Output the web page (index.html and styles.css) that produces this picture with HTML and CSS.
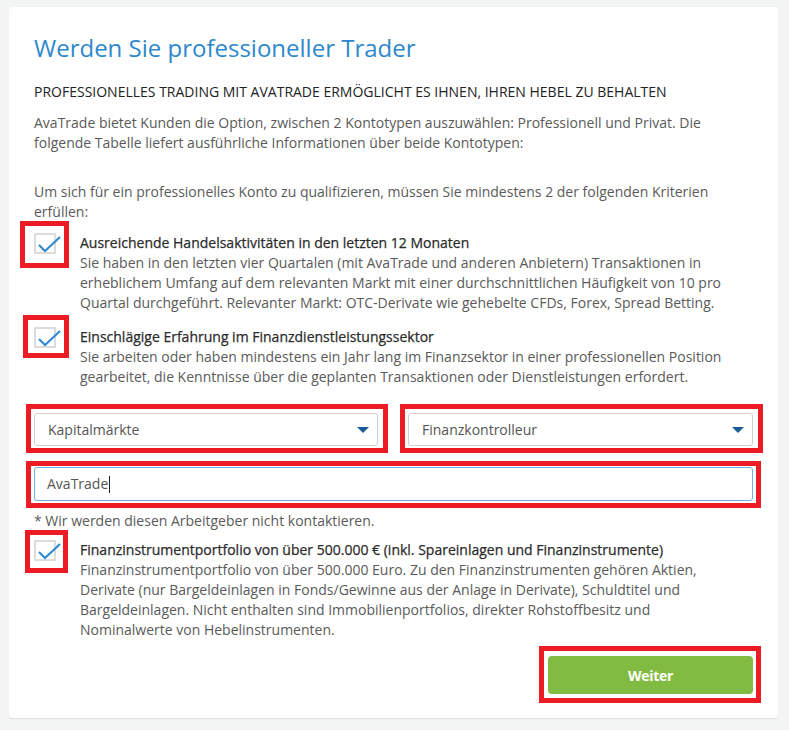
FILE: index.html
```html
<!DOCTYPE html>
<html lang="de">
<head>
<meta charset="utf-8">
<title>Professioneller Trader</title>
<link rel="stylesheet" href="styles.css">
</head>
<body>
<main class="card">
  <h1 class="title">Werden Sie professioneller Trader</h1>
  <h2 class="subtitle">PROFESSIONELLES TRADING MIT AVATRADE ERMÖGLICHT ES IHNEN, IHREN HEBEL ZU BEHALTEN</h2>
  <p class="intro">AvaTrade bietet Kunden die Option, zwischen 2 Kontotypen auszuwählen: Professionell und Privat. Die folgende Tabelle liefert ausführliche Informationen über beide Kontotypen:</p>
  <p class="lead">Um sich für ein professionelles Konto zu qualifizieren, müssen Sie mindestens 2 der folgenden Kriterien erfüllen:</p>

  <div class="criterion">
    <span class="check hl hl-check">
      <svg viewBox="0 0 30 22" width="30" height="22"><path d="M5 12 L11 18 L26 4" fill="none" stroke="#2f8ad0" stroke-width="2.2"/></svg>
    </span>
    <div class="crit-text">
      <div class="crit-title">Ausreichende Handelsaktivitäten in den letzten 12 Monaten</div>
      <div class="crit-body">Sie haben in den letzten vier Quartalen (mit AvaTrade und anderen Anbietern) Transaktionen in erheblichem Umfang auf dem relevanten Markt mit einer durchschnittlichen Häufigkeit von 10 pro Quartal durchgeführt. Relevanter Markt: OTC-Derivate wie gehebelte CFDs, Forex, Spread Betting.</div>
    </div>
  </div>

  <div class="criterion second">
    <span class="check hl hl-check2">
      <svg viewBox="0 0 30 22" width="30" height="22"><path d="M5 12 L11 18 L26 4" fill="none" stroke="#2f8ad0" stroke-width="2.2"/></svg>
    </span>
    <div class="crit-text">
      <div class="crit-title">Einschlägige Erfahrung im Finanzdienstleistungssektor</div>
      <div class="crit-body">Sie arbeiten oder haben mindestens ein Jahr lang im Finanzsektor in einer professionellen Position gearbeitet, die Kenntnisse über die geplanten Transaktionen oder Dienstleistungen erfordert.</div>
    </div>
  </div>

  <div class="selects">
    <div class="select hl hl-field"><span>Kapitalmärkte</span><i class="caret-down"></i></div>
    <div class="select hl hl-field"><span>Finanzkontrolleur</span><i class="caret-down"></i></div>
  </div>
  <div class="textbox hl hl-input"><span>AvaTrade</span><i class="cursor"></i></div>
  <p class="note">* Wir werden diesen Arbeitgeber nicht kontaktieren.</p>

  <div class="criterion third">
    <span class="check hl hl-check3">
      <svg viewBox="0 0 30 22" width="30" height="22"><path d="M5 12 L11 18 L26 4" fill="none" stroke="#2f8ad0" stroke-width="2.2"/></svg>
    </span>
    <div class="crit-text">
      <div class="crit-title">Finanzinstrumentportfolio von über 500.000 € (inkl. Spareinlagen und Finanzinstrumente)</div>
      <div class="crit-body">Finanzinstrumentportfolio von über 500.000 Euro. Zu den Finanzinstrumenten gehören Aktien, Derivate (nur Bargeldeinlagen in Fonds/Gewinne aus der Anlage in Derivate), Schuldtitel und Bargeldeinlagen. Nicht enthalten sind Immobilienportfolios, direkter Rohstoffbesitz und Nominalwerte von Hebelinstrumenten.</div>
    </div>
  </div>

  <div class="actions">
    <button class="btn hl hl-btn" type="button">Weiter</button>
  </div>
</main>
</body>
</html>
```

FILE: styles.css
```css
* { box-sizing: border-box; }

html, body {
  margin: 0;
  padding: 0;
  background: #f3f4f4;
}

body {
  padding: 7px 11px 12px 9px;
  font-family: "Open Sans", "Liberation Sans", sans-serif;
  font-size: 14px;
  line-height: 20px;
  color: #5a5a5a;
}

.card {
  background: #fff;
  border-radius: 3px;
  box-shadow: 0 1px 1px rgba(0, 0, 0, 0.08);
  padding: 25px 25px 24px 25px;
  min-height: 711px;
}

.title {
  margin: 0;
  font-size: 24px;
  line-height: 32px;
  font-weight: 400;
  color: #2e88cb;
}

.subtitle {
  margin: 18px 0 0;
  font-size: 14px;
  line-height: 20px;
  font-weight: 400;
  color: #222;
}

.intro {
  margin: 11px 0 0;
}

.lead {
  margin: 29px 0 0;
}

/* criteria with their checkbox */
.criterion {
  display: flex;
  margin-top: 11px;
}
.criterion.second { margin-top: 14px; }
.criterion.third { margin-top: 9px; }

.check {
  flex: none;
  width: 22px;
  height: 21px;
  border: 2px solid #dcdcdc;
  border-radius: 1px;
  position: relative;
  margin-right: 24px;
}
.check svg {
  position: absolute;
  left: -2px;
  top: -2px;
  z-index: 1;
}

.crit-text {
  flex: 1;
  padding-right: 24px;
}

.crit-title {
  color: #2b2b2b;
  font-weight: 500;
  -webkit-text-stroke: 0.25px #2b2b2b;
}

.crit-body { color: #5a5a5a; }

/* selects + text field */
.selects {
  display: grid;
  grid-template-columns: 344px 345px;
  gap: 30px;
  margin-top: 26px;
}

.select {
  position: relative;
  height: 33px;
  border: 1px solid #cfcfcf;
  border-radius: 3px;
  padding: 0 13px;
  display: flex;
  align-items: center;
  justify-content: space-between;
  color: #555;
}

.caret-down {
  width: 0;
  height: 0;
  border-left: 6px solid transparent;
  border-right: 6px solid transparent;
  border-top: 6px solid #185a95;
  margin-right: -5px;
}

.textbox {
  position: relative;
  margin-top: 21px;
  height: 34px;
  border: 1px solid #6cb0e6;
  border-radius: 3px;
  padding: 0 12px;
  display: flex;
  align-items: center;
  color: #555;
}

.cursor {
  display: inline-block;
  width: 1px;
  height: 17px;
  background: #222;
  margin-left: 1px;
}

.note {
  margin: 10px 0 0;
  color: #5a5a5a;
}

/* button row */
.actions {
  display: flex;
  justify-content: flex-end;
  margin-top: 16px;
}

.btn {
  position: relative;
  width: 205px;
  height: 38px;
  border: 0;
  border-radius: 4px;
  background: #82bb42;
  color: #fff;
  font-family: inherit;
  font-size: 14px;
  font-weight: 700;
  letter-spacing: -0.3px;
}

/* red highlight frames */
.hl::after {
  content: "";
  position: absolute;
  border: 5px solid #ed1c24;
  pointer-events: none;
}
.hl-check::after { left: -16px; right: -15px; top: -14px; bottom: -16px; }
.hl-check2::after { left: -13px; right: -15px; top: -14px; bottom: -12px; }
.hl-check3::after { left: -11px; right: -14px; top: -12px; bottom: -14px; }
.hl-field::after { left: -9px; right: -11px; top: -10px; bottom: -8px; }
.hl-input::after { left: -9px; right: -9px; top: -7px; bottom: -8px; }
.hl-btn::after { left: -9px; right: -8px; top: -10px; bottom: -9px; }
```
